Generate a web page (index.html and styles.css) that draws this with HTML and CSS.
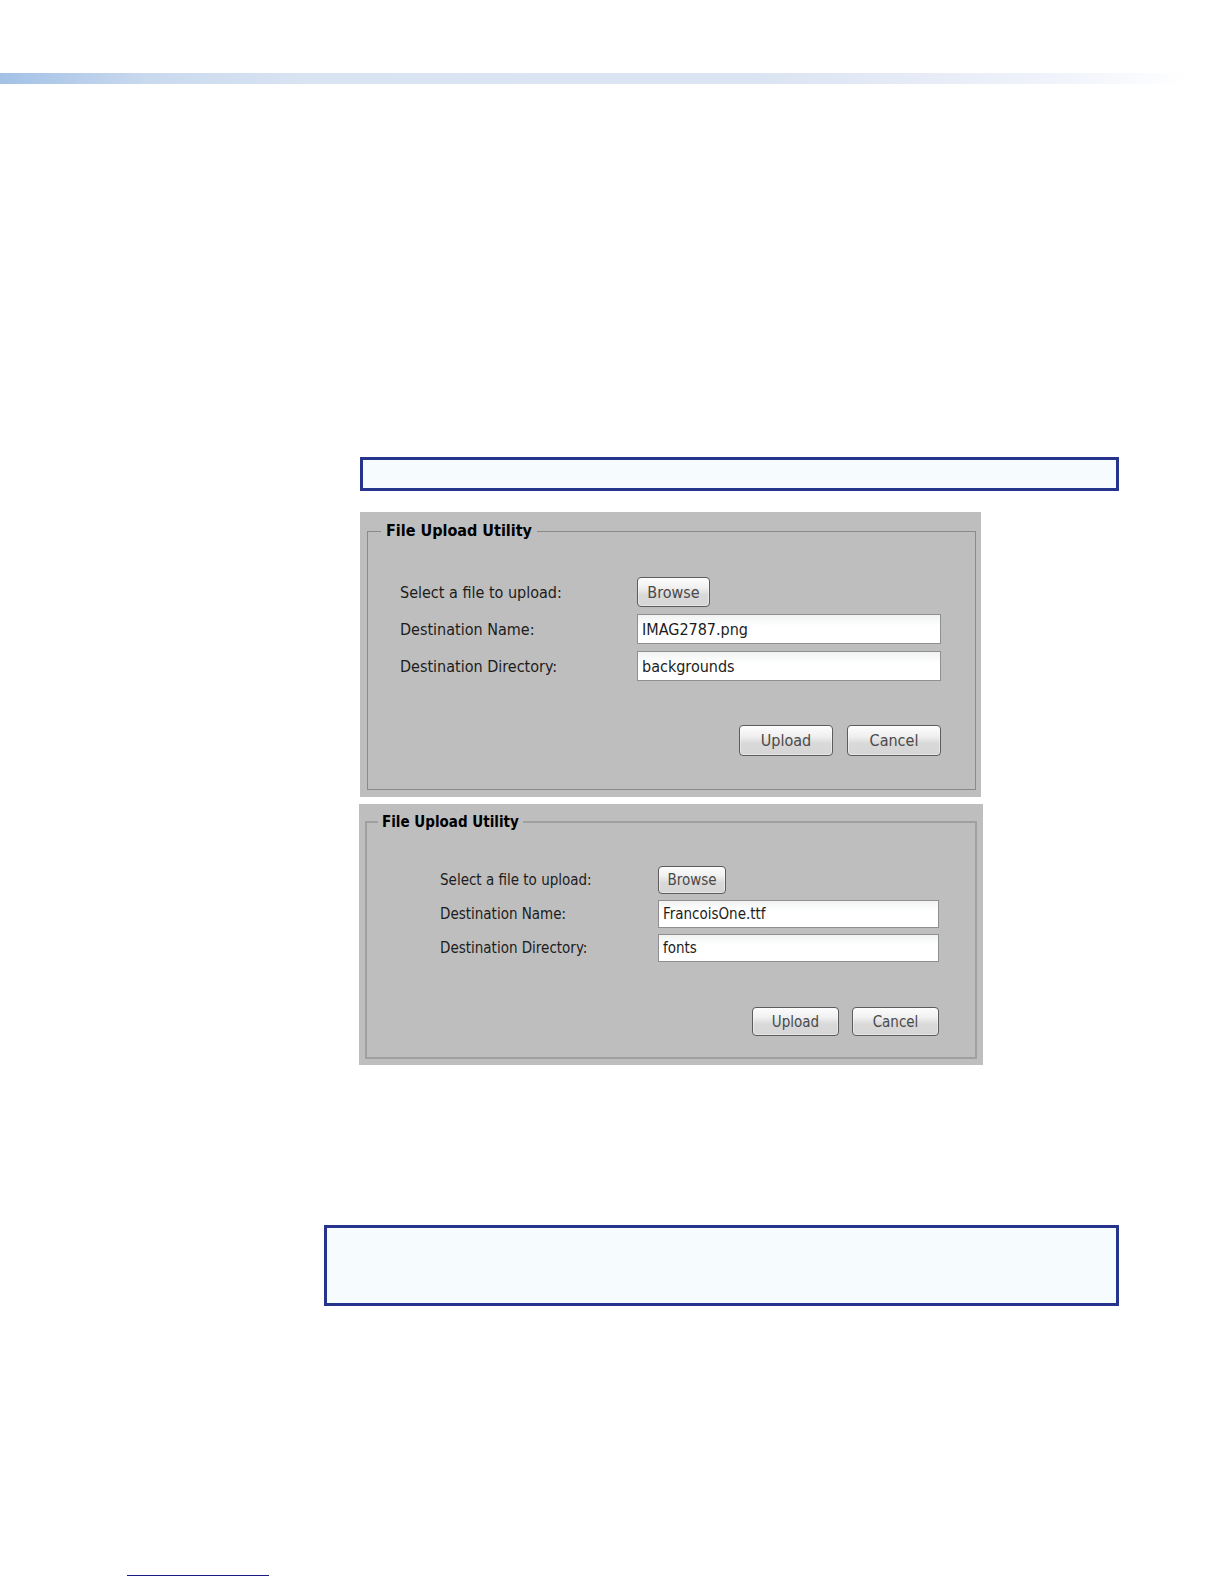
FILE: index.html
```
<!DOCTYPE html>
<html lang="en">
<head>
    <meta charset="utf-8">
    <title>File Upload Utility</title>
    <link rel="stylesheet" href="styles.css">
</head>
<body>
    <header class="top-band"></header>

    <main class="content">
        <div class="note note-small"></div>

        <form class="panel panel-background">
            <fieldset>
                <legend>File Upload Utility</legend>
                <div class="fields">
                    <label for="bg-browse">Select a file to upload:</label>
                    <button type="button" id="bg-browse" class="browse">Browse</button>
                    <label for="bg-name">Destination Name:</label>
                    <input type="text" id="bg-name" value="IMAG2787.png">
                    <label for="bg-dir">Destination Directory:</label>
                    <input type="text" id="bg-dir" value="backgrounds">
                </div>
                <div class="actions">
                    <button type="submit">Upload</button>
                    <button type="button">Cancel</button>
                </div>
            </fieldset>
        </form>

        <form class="panel panel-font">
            <fieldset>
                <legend>File Upload Utility</legend>
                <div class="fields">
                    <label for="font-browse">Select a file to upload:</label>
                    <button type="button" id="font-browse" class="browse">Browse</button>
                    <label for="font-name">Destination Name:</label>
                    <input type="text" id="font-name" value="FrancoisOne.ttf">
                    <label for="font-dir">Destination Directory:</label>
                    <input type="text" id="font-dir" value="fonts">
                </div>
                <div class="actions">
                    <button type="submit">Upload</button>
                    <button type="button">Cancel</button>
                </div>
            </fieldset>
        </form>

        <div class="note note-large"></div>
    </main>

    <footer>
        <div class="footer-rule"></div>
    </footer>
</body>
</html>
```
FILE: styles.css
```
* {
    box-sizing: border-box;
}
body {
    margin: 0;
    min-height: 100vh;
    display: flex;
    flex-direction: column;
    background-color: #fff;
    color: #1c1c1c;
    font-family: "DejaVu Sans Condensed", Tahoma, "DejaVu Sans", sans-serif;
}
.top-band {
    height: 11px;
    margin-top: 73px;
    background: linear-gradient(to right, #a3c1e6 0%, #c9d9ee 12%, #d9e4f2 25%, #dbe4f2 62%, #e6ebf7 75%, #f1f4fb 87%, #fff 97%);
}
.content {
    padding: 373px 105px 0 324px;
}

/* outlined note boxes */
.note {
    border: 3px solid #27348b;
    background-color: #f6fbfe;
}
.note-small {
    height: 34px;
    margin-left: 36px;
}
.note-large {
    height: 81px;
    margin-top: 160px;
}

/* upload panels */
.panel {
    background-color: #bebebe;
}
.panel fieldset {
    margin: 0;
    min-width: 0;
}
.panel legend {
    color: #000;
    font-weight: bold;
    line-height: 20px;
}
.fields {
    display: grid;
    align-items: center;
}
.actions {
    display: flex;
    justify-content: flex-end;
}
.panel input {
    width: 100%;
    height: 100%;
    padding: 0 4px;
    border: 1px solid #8f8f8f;
    background: linear-gradient(#f1f3f3, #fff 40%);
    color: #1c1c1c;
    font: inherit;
}
.panel button {
    height: 100%;
    padding: 0;
    border: 1px solid #5c5c5c;
    border-radius: 4px;
    background: linear-gradient(#fdfdfd 0%, #f0f0f0 35%, #d9d9d9 60%, #d6d6d6 100%);
    box-shadow: inset 0 0 0 1px rgba(255, 255, 255, 0.4);
    color: #4a4a4a;
    font: inherit;
}

.panel-background {
    max-width: 621px;
    margin: 21px 0 0 36px;
    padding: 9px 5px 7px 7px;
    font-size: 16px;
}
.panel-background fieldset {
    padding: 0 34px 33px 13px;
    border: 1px solid #8a8a8a;
}
.panel-background legend {
    padding: 0 5px;
}
.panel-background .fields {
    grid-template-columns: 237px 1fr;
    grid-auto-rows: 30px;
    row-gap: 7px;
    padding: 36px 0 0 19px;
}
.panel-background .browse {
    width: 73px;
}
.panel-background .actions {
    height: 31px;
    margin-top: 44px;
    gap: 14px;
}
.panel-background .actions button {
    width: 94px;
}

.panel-font {
    max-width: 624px;
    margin: 7px 0 0 35px;
    padding: 8px 6px 6px;
    font-size: 15px;
}
.panel-font fieldset {
    padding: 0 36px 21px 11px;
    border: 2px solid #a0a0a0;
}
.panel-font legend {
    padding: 0 4px;
}
.panel-font .fields {
    grid-template-columns: 218px 1fr;
    grid-auto-rows: 28px;
    row-gap: 6px;
    padding: 34px 0 0 62px;
}
.panel-font .browse {
    width: 68px;
}
.panel-font .actions {
    height: 29px;
    margin-top: 45px;
    gap: 13px;
}
.panel-font .actions button {
    width: 87px;
}

footer {
    margin-top: auto;
    padding: 0 127px 8px;
}
.footer-rule {
    width: 142px;
    height: 1px;
    background-color: #1b1b84;
}
```
